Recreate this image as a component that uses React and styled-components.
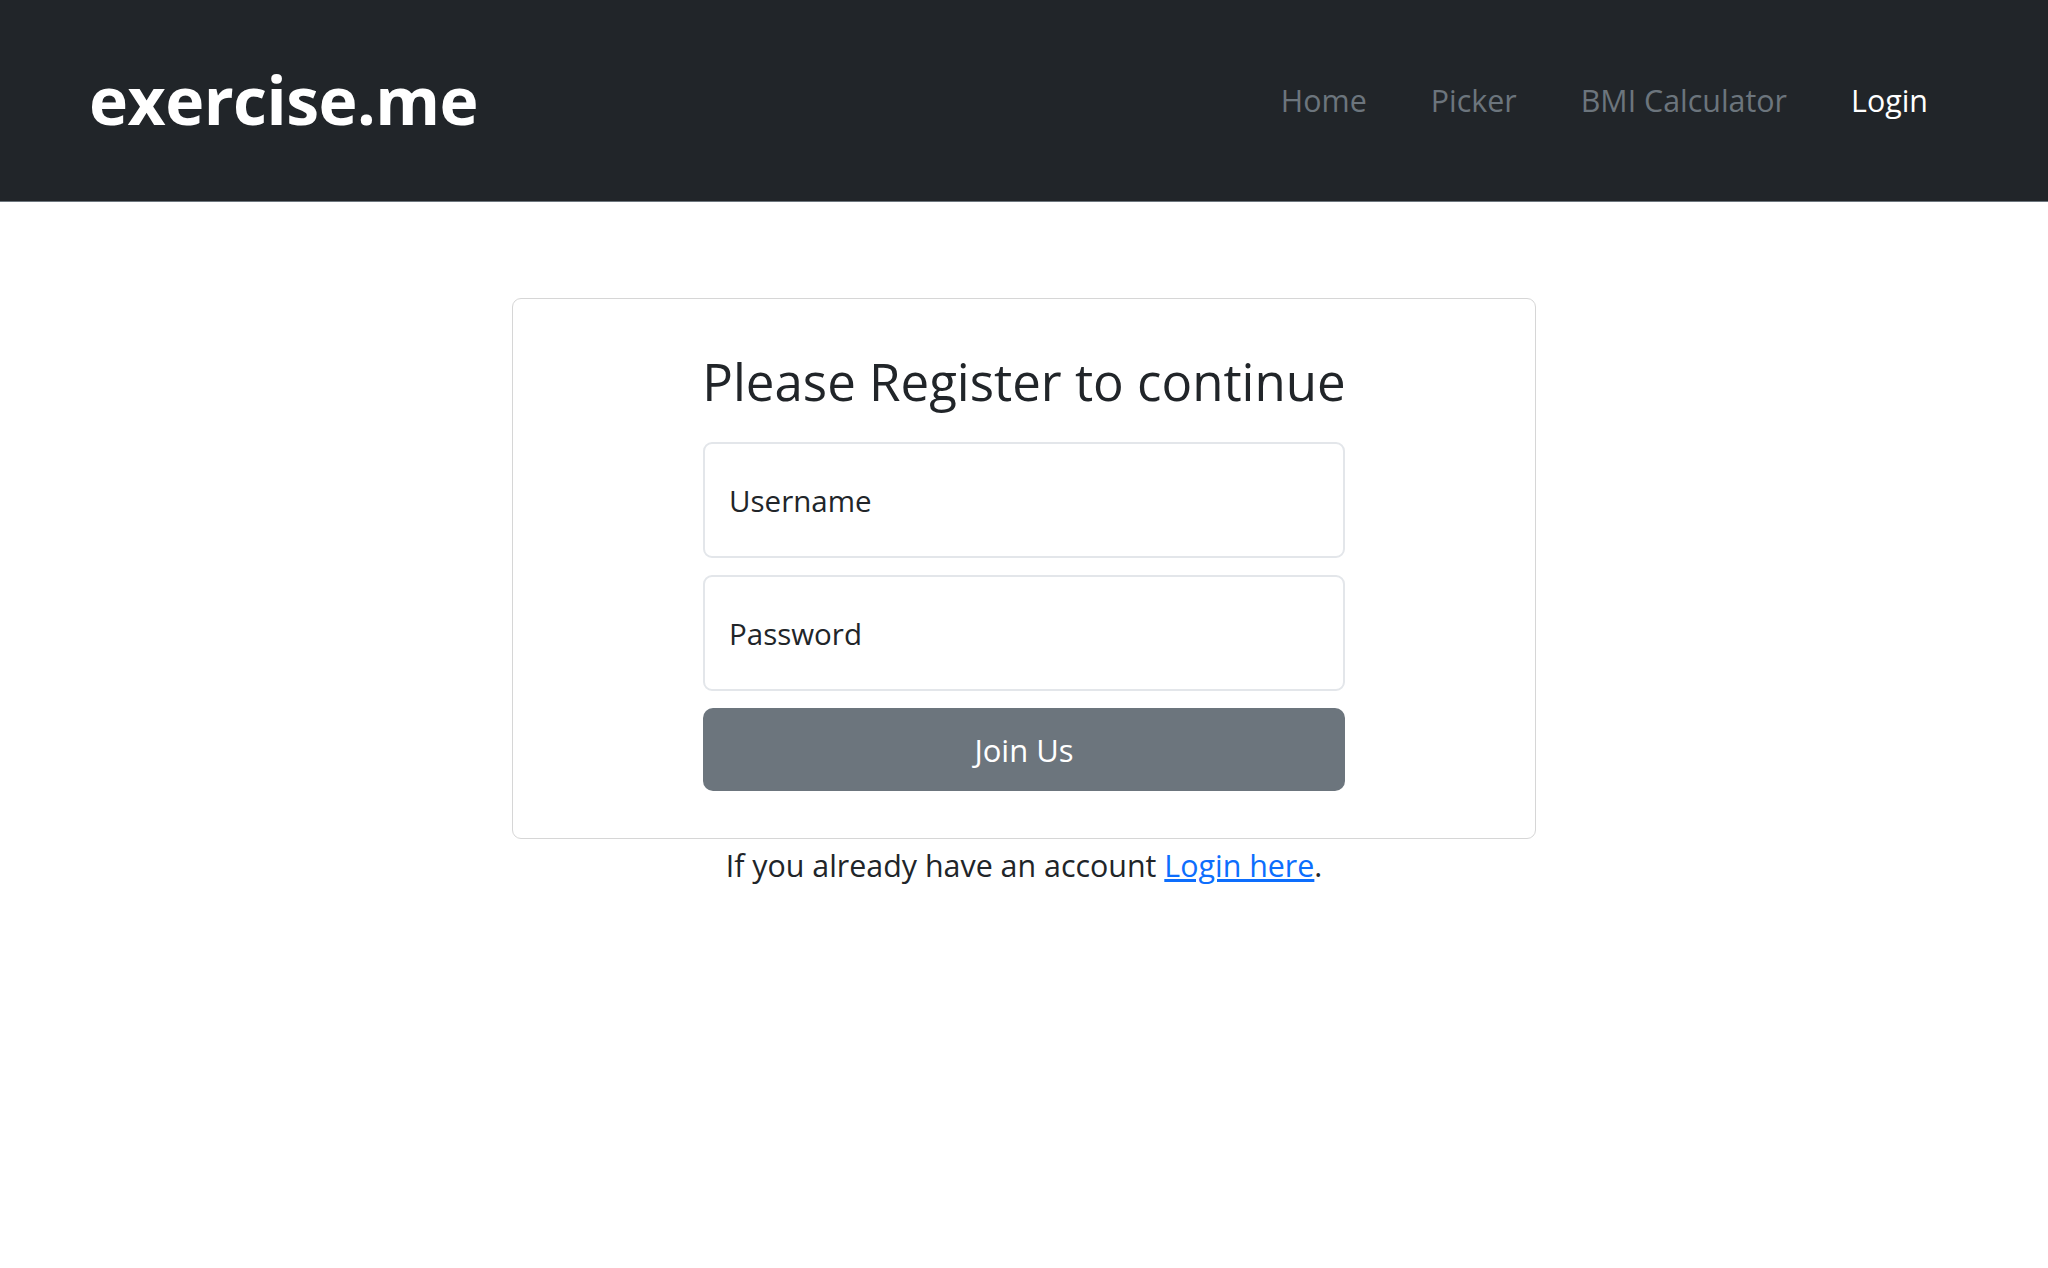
import * as React from 'react';
import styled, { createGlobalStyle } from 'styled-components';

const GlobalStyle = createGlobalStyle`
  html, body {
    margin: 0;
    padding: 0;
    background: #fff;
    color: #212529;
    font-family: "Open Sans", "Noto Sans", sans-serif;
  }
  * {
    box-sizing: border-box;
  }
`;

const HeaderElem = styled.header`
  display: flex;
  align-items: center;
  justify-content: space-between;

  height: 202px;
  padding: 0 88px 0 89px;
  background: #212529;
  border-bottom: 1px solid #6c757d;
`;

const Logo = styled.a`
  color: #fff;
  font-size: 66px;
  font-weight: 700;
  letter-spacing: -0.5px;
  text-decoration: none;
  margin-top: -4px;
`;

const Nav = styled.nav`
  display: flex;
  align-items: center;
`;

const NavLink = styled.a`
  padding: 0 32px;
  font-size: 30.4px;
  color: ${props => (props.$active ? '#ffffff' : '#6c757d')};
  text-decoration: none;
  cursor: pointer;

  &:hover {
    color: #adb5bd;
  }
`;

function Header() {
  const links = ['Home', 'Picker', 'BMI Calculator', 'Login'];
  return (
    <HeaderElem>
      <Logo href="#">exercise.me</Logo>
      <Nav>
        {links.map(l => (
          <NavLink key={l} $active={l === 'Login'}>{l}</NavLink>
        ))}
      </Nav>
    </HeaderElem>
  );
}

const Main = styled.main`
  display: flex;
  flex-direction: column;
  align-items: center;
  padding-top: 96px;
`;

const Card = styled.div`
  display: flex;
  flex-direction: column;
  align-items: center;

  width: 1024px;
  padding: 52px 0 47px;
  border: 1px solid #d6d6d6;
  border-radius: 9px;
`;

const Title = styled.h1`
  margin: 0 0 30px;
  font-size: 51px;
  font-weight: 400;
  line-height: 1.2;
  color: #212529;
`;

const Form = styled.form`
  display: flex;
  flex-direction: column;
  gap: 17px;
  width: 642px;
`;

const Input = styled.input`
  height: 116px;
  padding: 0 24px;
  border: 2px solid #e3e6ea;
  border-radius: 9px;
  font-family: inherit;
  font-size: 29.5px;
  color: #212529;
  outline: none;

  &::placeholder {
    color: #212529;
    opacity: 1;
  }
`;

const Button = styled.button`
  height: 83px;
  border: none;
  border-radius: 10px;
  background: #6c757d;
  color: #fff;
  font-family: inherit;
  font-size: 31px;
  cursor: pointer;
`;

const Footnote = styled.p`
  margin: 4px 0 0;
  font-size: 30.4px;
  line-height: 1.5;

  > a {
    color: #0d6efd;
  }
`;

export default function App() {
  return (
    <>
      <GlobalStyle />
      <Header />
      <Main>
        <Card>
          <Title>Please Register to continue</Title>
          <Form onSubmit={e => e.preventDefault()}>
            <Input placeholder="Username" />
            <Input type="password" placeholder="Password" />
            <Button type="submit">Join Us</Button>
          </Form>
        </Card>
        <Footnote>
          If you already have an account <a href="#">Login here</a>.
        </Footnote>
      </Main>
    </>
  );
}
